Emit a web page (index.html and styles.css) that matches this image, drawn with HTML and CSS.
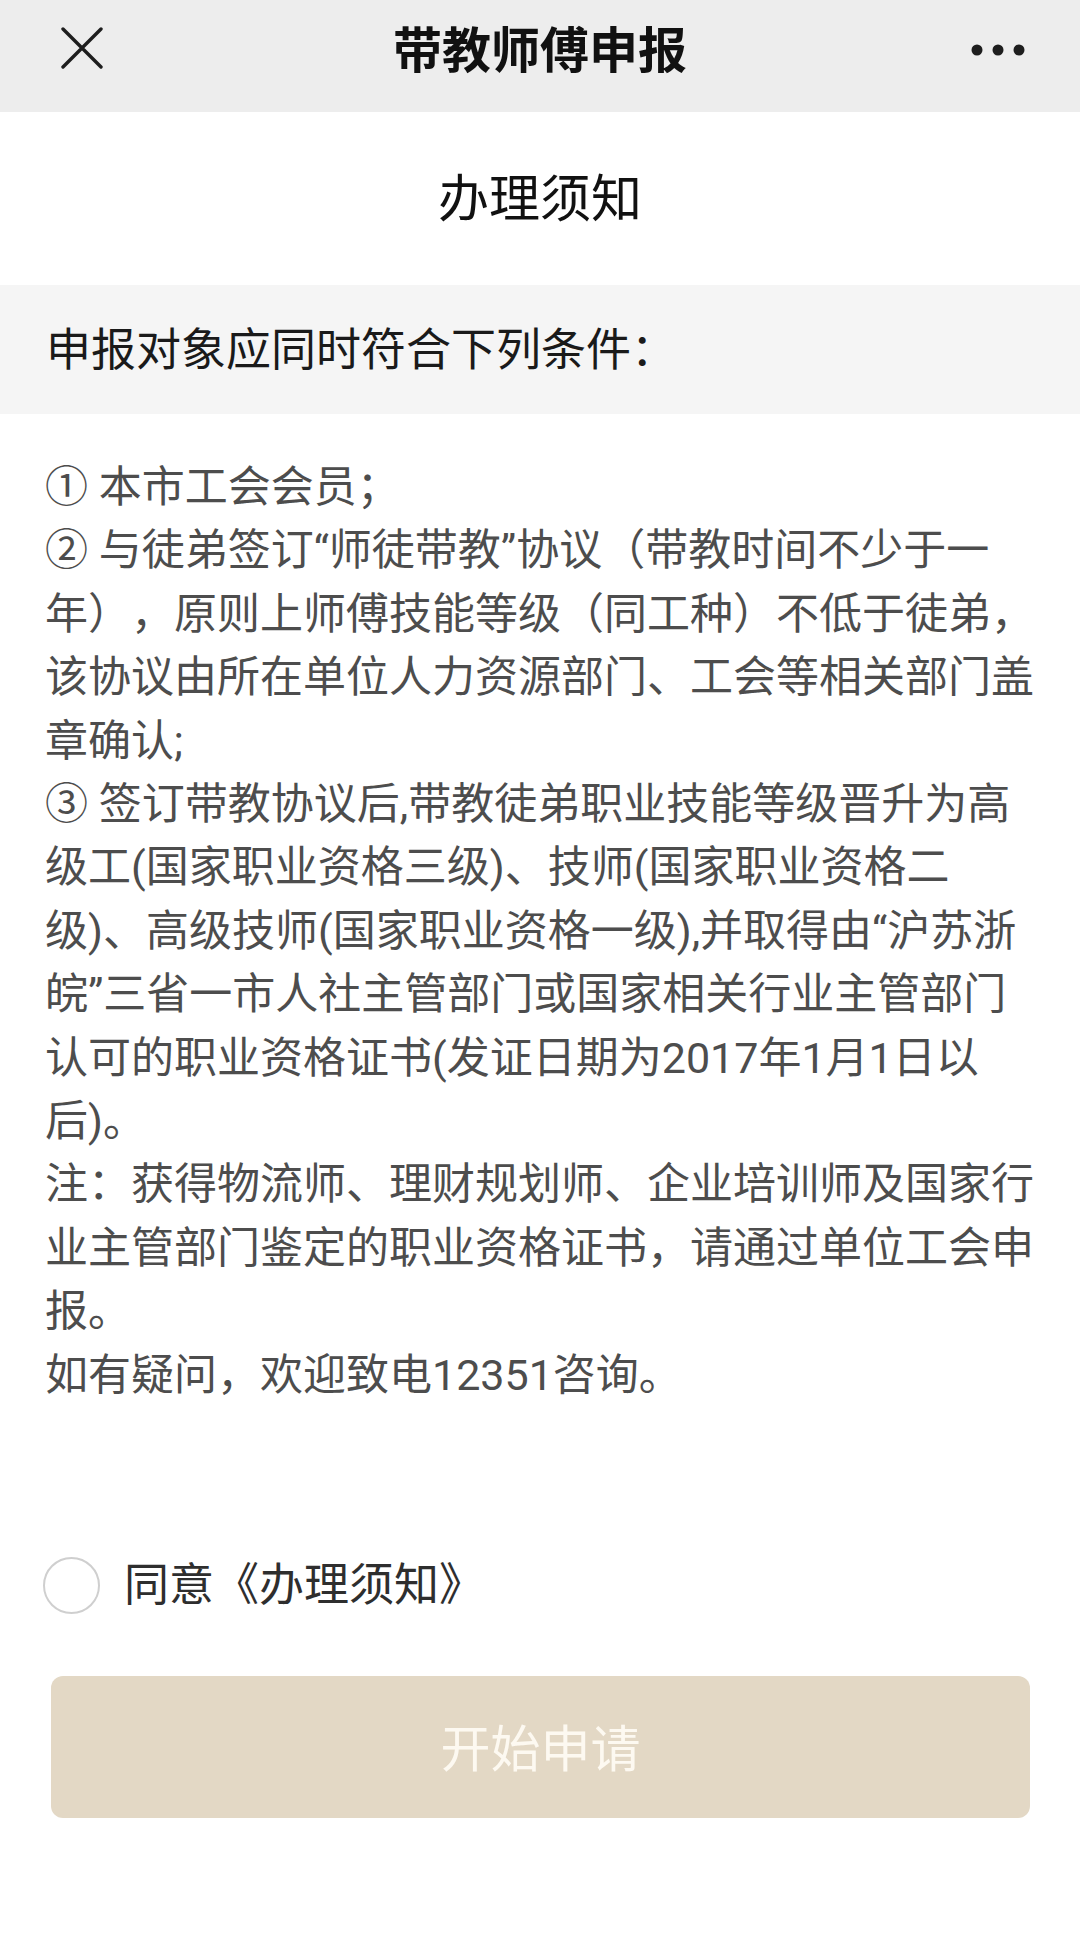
FILE: index.html
```html
<!DOCTYPE html>
<html lang="zh-CN">
<head>
<meta charset="utf-8">
<title>带教师傅申报</title>
<link rel="stylesheet" href="styles.css">
</head>
<body>
<header class="topbar">
  <div class="topbar-left">
    <svg class="icon-close" width="42" height="42" viewBox="0 0 42 42" aria-hidden="true">
      <path d="M2 2 L40 40 M40 2 L2 40" stroke="#1e1e1e" stroke-width="3.4" stroke-linecap="round" fill="none"/>
    </svg>
  </div>
  <h1 class="topbar-title">带教师傅申报</h1>
  <div class="topbar-right">
    <svg class="icon-more" width="54" height="12" viewBox="0 0 54 12" aria-hidden="true">
      <circle cx="6" cy="6" r="5.5" fill="#1e1e1e"/>
      <circle cx="27" cy="6" r="5.5" fill="#1e1e1e"/>
      <circle cx="48" cy="6" r="5.5" fill="#1e1e1e"/>
    </svg>
  </div>
</header>
<main class="page">
  <h2 class="notice-title">办理须知</h2>
  <div class="band">申报对象应同时符合下列条件：</div>
  <div class="content">
    <p>① 本市工会会员；</p>
    <p>② 与徒弟签订“师徒带教”协议（带教时间不少于一<br>年），原则上师傅技能等级（同工种）不低于徒弟，<br>该协议由所在单位人力资源部门、工会等相关部门盖<br>章确认;</p>
    <p>③ 签订带教协议后,带教徒弟职业技能等级晋升为高<br>级工(国家职业资格三级)、技师(国家职业资格二<br>级)、高级技师(国家职业资格一级),并取得由“沪苏浙<br>皖”三省一市人社主管部门或国家相关行业主管部门<br>认可的职业资格证书(发证日期为2017年1月1日以<br>后)。</p>
    <p>注：获得物流师、理财规划师、企业培训师及国家行<br>业主管部门鉴定的职业资格证书，请通过单位工会申<br>报。</p>
    <p>如有疑问，欢迎致电12351咨询。</p>
  </div>
  <label class="agree">
    <span class="radio"></span>
    <span class="agree-text">同意《办理须知》</span>
  </label>
  <div class="actions">
    <button class="start-btn" type="button">开始申请</button>
  </div>
</main>
</body>
</html>
```
FILE: styles.css
```css
* {
  box-sizing: border-box;
}

html, body {
  margin: 0;
  padding: 0;
  background: #ffffff;
}

body {
  width: 1080px;
  min-height: 1949px;
  font-family: Roboto, "Noto Sans CJK SC", sans-serif;
  color: #222;
  text-spacing-trim: space-all;
}

.topbar {
  height: 112px;
  background: #ededed;
  display: grid;
  grid-template-columns: 1fr auto 1fr;
  align-items: center;
  padding-bottom: 12px;
}

.topbar-left {
  display: flex;
  align-items: center;
  padding-left: 61px;
}

.icon-close {
  display: block;
  margin-top: -4px;
}

.topbar-title {
  margin: -8px 0 0;
  font-family: "Noto Sans CJK SC", sans-serif;
  font-size: 49px;
  font-weight: 700;
  line-height: 1;
  color: #111;
}

.topbar-right {
  display: flex;
  justify-content: flex-end;
  padding-right: 55px;
}

.icon-more {
  display: block;
}

.notice-title {
  margin: 0;
  height: 173px;
  display: flex;
  align-items: center;
  justify-content: center;
  font-family: "Noto Sans CJK SC", sans-serif;
  font-size: 51px;
  font-weight: 400;
  color: #111;
  padding-bottom: 8px;
}

.band {
  height: 129px;
  background: #f5f5f5;
  display: flex;
  align-items: center;
  padding-left: 46px;
  padding-bottom: 6px;
  font-size: 45px;
  color: #1a1a1a;
}

.content {
  padding: 42px 20px 0 45px;
  font-size: 43px;
  line-height: 63.4px;
  color: #4d4d4d;
  white-space: nowrap;
}

.content p {
  margin: 0;
}

.agree {
  display: flex;
  align-items: center;
  gap: 24px;
  margin-top: 150px;
  padding-left: 43px;
  height: 57px;
}

.radio {
  width: 57px;
  height: 57px;
  border-radius: 50%;
  border: 2.5px solid #cfcfcf;
  background: #fff;
  flex: none;
}

.agree-text {
  font-size: 45px;
  color: #2e2e2e;
  line-height: 1;
}

.actions {
  padding: 62px 50px 0 51px;
}

.start-btn {
  display: flex;
  align-items: center;
  justify-content: center;
  width: 100%;
  height: 142px;
  border: none;
  border-radius: 12px;
  background: #e3d8c5;
  font-family: "Noto Sans CJK SC", sans-serif;
  font-size: 50px;
  color: #fdf9f1;
  padding: 0 0 4px;
}
```
